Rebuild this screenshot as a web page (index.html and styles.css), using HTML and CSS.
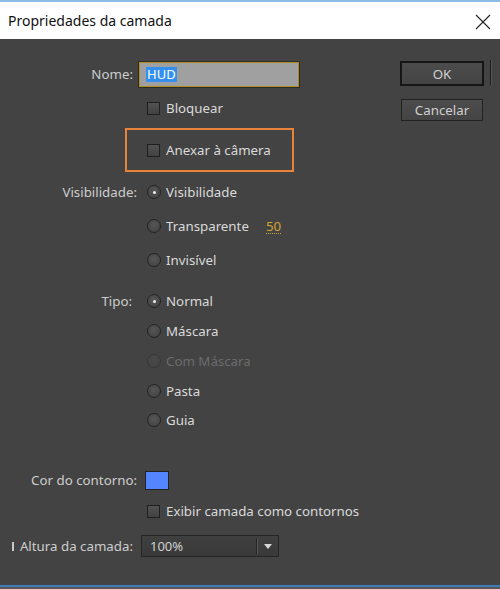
FILE: index.html
```html
<!DOCTYPE html>
<html lang="pt">
<head>
<meta charset="utf-8">
<title>Propriedades da camada</title>
<link rel="stylesheet" href="styles.css">
</head>
<body>
<div class="window">
  <div class="titlebar">
    <span class="title">Propriedades da camada</span>
    <svg class="close" width="16" height="16" viewBox="0 0 16 16"><path d="M1 1 L15 15 M15 1 L1 15" stroke="#222" stroke-width="1.1" fill="none"/></svg>
  </div>
  <div class="content">
    <div class="form">
      <div class="row r-nome">
        <label class="lbl lbl-nome">Nome:</label>
        <div class="field"><span class="sel">HUD</span></div>
      </div>
      <div class="row r-bloq">
        <span class="lbl"></span>
        <span class="opt"><span class="check"></span>Bloquear</span>
      </div>
      <div class="row r-anexar">
        <span class="lbl"></span>
        <div class="highlight"><span class="opt"><span class="check"></span>Anexar à câmera</span></div>
      </div>
      <div class="row r-vis">
        <span class="lbl">Visibilidade:</span>
        <span class="opt"><span class="radio on"></span>Visibilidade</span>
      </div>
      <div class="row r-vis2">
        <span class="lbl"></span>
        <span class="opt"><span class="radio"></span>Transparente<span class="num">50</span></span>
      </div>
      <div class="row r-vis2">
        <span class="lbl"></span>
        <span class="opt"><span class="radio"></span>Invisível</span>
      </div>
      <div class="row r-tipo">
        <span class="lbl lbl-tipo">Tipo:</span>
        <span class="opt"><span class="radio on"></span>Normal</span>
      </div>
      <div class="row r-tipo2">
        <span class="lbl"></span>
        <span class="opt"><span class="radio"></span>Máscara</span>
      </div>
      <div class="row r-tipo2">
        <span class="lbl"></span>
        <span class="opt disabled"><span class="radio"></span>Com Máscara</span>
      </div>
      <div class="row r-tipo2">
        <span class="lbl"></span>
        <span class="opt"><span class="radio"></span>Pasta</span>
      </div>
      <div class="row r-tipo3">
        <span class="lbl"></span>
        <span class="opt"><span class="radio"></span>Guia</span>
      </div>
      <div class="row r-cor">
        <span class="lbl">Cor do contorno:</span>
        <span class="swatch"></span>
      </div>
      <div class="row r-exib">
        <span class="lbl"></span>
        <span class="opt"><span class="check"></span>Exibir camada como contornos</span>
      </div>
      <div class="row r-alt">
        <span class="lbl lbl-alt"><span class="bar"></span><span class="grow"></span>Altura da camada:</span>
        <div class="dropdown"><span class="dd-val">100%</span><span class="dd-btn"><svg width="8" height="5" viewBox="0 0 8 5"><path d="M0 0 H8 L4 5 Z" fill="#d8d8d8"/></svg></span></div>
      </div>
    </div>
    <div class="actions">
      <div class="btns">
        <button class="btn btn-ok">OK</button>
        <button class="btn btn-cancel">Cancelar</button>
      </div>
      <div class="sep"></div>
    </div>
  </div>
  <div class="bottom"></div>
</div>
</body>
</html>
```

FILE: styles.css
```css
* { box-sizing: border-box; }
html, body { margin: 0; padding: 0; }
body {
  width: 500px;
  height: 589px;
  overflow: hidden;
  background: #434343;
  font-family: "Noto Sans", "Open Sans", sans-serif;
}
.window { display: flex; flex-direction: column; height: 589px; }

.titlebar {
  height: 39px;
  background: #fff;
  border-top: 2px solid #8cbbe6;
  display: flex;
  align-items: center;
  justify-content: space-between;
  padding: 0 9px 0 8px;
}
.title { font-size: 14px; color: #111; margin-top: -1px; }
.close { display: block; margin-top: 2px; }

.content {
  height: 546px;
  background: #434343;
  display: flex;
  padding-top: 22px;
}
.form { width: 400px; display: flex; flex-direction: column; }

.row { display: flex; align-items: center; height: 20px; }
.lbl {
  width: 137px;
  flex: none;
  text-align: right;
  font-size: 13.3px;
  color: #cdcdcd;
  white-space: nowrap;
}
.lbl-nome { padding-right: 4px; }
.lbl-tipo { padding-right: 5px; }
.lbl-alt { padding-right: 4px; display: flex; align-items: center; padding-left: 12px; }
.bar { width: 2px; height: 9px; background: #c8c8c8; margin-top: 1px; }
.grow { flex: 1; }

.opt {
  display: flex;
  align-items: center;
  padding-left: 10px;
  font-size: 13.3px;
  color: #dadada;
  white-space: nowrap;
}
.opt.disabled { color: #6b6b6b; }
.opt.disabled .radio { opacity: 0.35; }

.check {
  width: 13px; height: 13px;
  border: 1px solid #1f1f1f;
  background: linear-gradient(#525252, #424242);
  margin-right: 6px;
  flex: none;
}
.radio {
  width: 14px; height: 14px;
  border-radius: 50%;
  border: 1px solid #232323;
  background: radial-gradient(circle at 50% 40%, #565656, #404040);
  margin-right: 5px;
  flex: none;
  position: relative;
}
.radio.on::after {
  content: "";
  position: absolute;
  left: 4.5px; top: 4.5px;
  width: 3px; height: 3px;
  border-radius: 50%;
  background: #f0f0f0;
}

.r-nome { height: 26px; }
.field {
  margin-left: 2px;
  width: 160px; height: 25px;
  background: #a0a0a0;
  border: 1px solid #b08c1e;
  box-shadow: 0 0 0 1px #2c2c2c;
  display: flex;
  align-items: center;
  padding-left: 6px;
}
.sel {
  background: #3390ee;
  color: #fff;
  font-size: 13px;
  line-height: 15px;
  padding: 0 1px;
}

.r-bloq { margin-top: 11px; }
.r-anexar { margin-top: 10px; height: 44px; }
.highlight {
  margin-left: -12px;
  width: 169px; height: 44px;
  border: 2px solid #e8843a;
  display: flex;
  align-items: center;
  padding-left: 10px;
}
.r-vis { margin-top: 10px; }
.r-vis2 { margin-top: 14px; }
.num {
  margin-left: 17px;
  color: #d4a232;
  border-bottom: 1px dotted #d4a232;
  line-height: 14px;
}
.r-tipo { margin-top: 21px; }
.r-tipo2 { margin-top: 10px; }
.r-tipo3 { margin-top: 9px; }
.r-cor { margin-top: 40px; }
.swatch {
  margin-left: 8px;
  width: 24px; height: 19px;
  background: #5484ff;
  border: 1px solid #232323;
}
.r-exib { margin-top: 11px; }
.r-alt { margin-top: 14px; height: 22px; }
.dropdown {
  margin-left: 4px;
  width: 138px; height: 22px;
  border: 1px solid #252525;
  background: linear-gradient(#404040, #393939);
  display: flex;
  align-items: center;
}
.dd-val { flex: 1; padding-left: 8px; font-size: 13px; color: #d0d0d0; }
.dd-btn {
  width: 22px; height: 16px;
  border-left: 1px solid #262626;
  box-shadow: inset 1px 0 0 #555;
  display: flex; align-items: center; justify-content: center;
}
.dd-btn svg { display: block; }

.actions { display: flex; align-items: flex-start; }
.btns { display: flex; flex-direction: column; align-items: center; width: 84px; }
.btn {
  font-family: "Noto Sans", "Open Sans", sans-serif;
  font-size: 13.3px;
  color: #d0d0d0;
  background: linear-gradient(#4c4c4c, #444);
  padding: 0;
}
.btn-ok {
  width: 84px; height: 25px;
  border: 2px solid #151515;
}
.btn-cancel {
  width: 82px; height: 22px;
  margin-top: 13px;
  border: 1px solid #222;
}
.sep {
  width: 1px; height: 25px;
  margin-left: 6px;
  margin-top: -1px;
  background: #1c1c1c;
  box-shadow: 1px 0 0 #555;
}

.bottom {
  height: 4px;
  border-top: 2px solid #3d7ab8;
  background: #5a5651;
}
```
